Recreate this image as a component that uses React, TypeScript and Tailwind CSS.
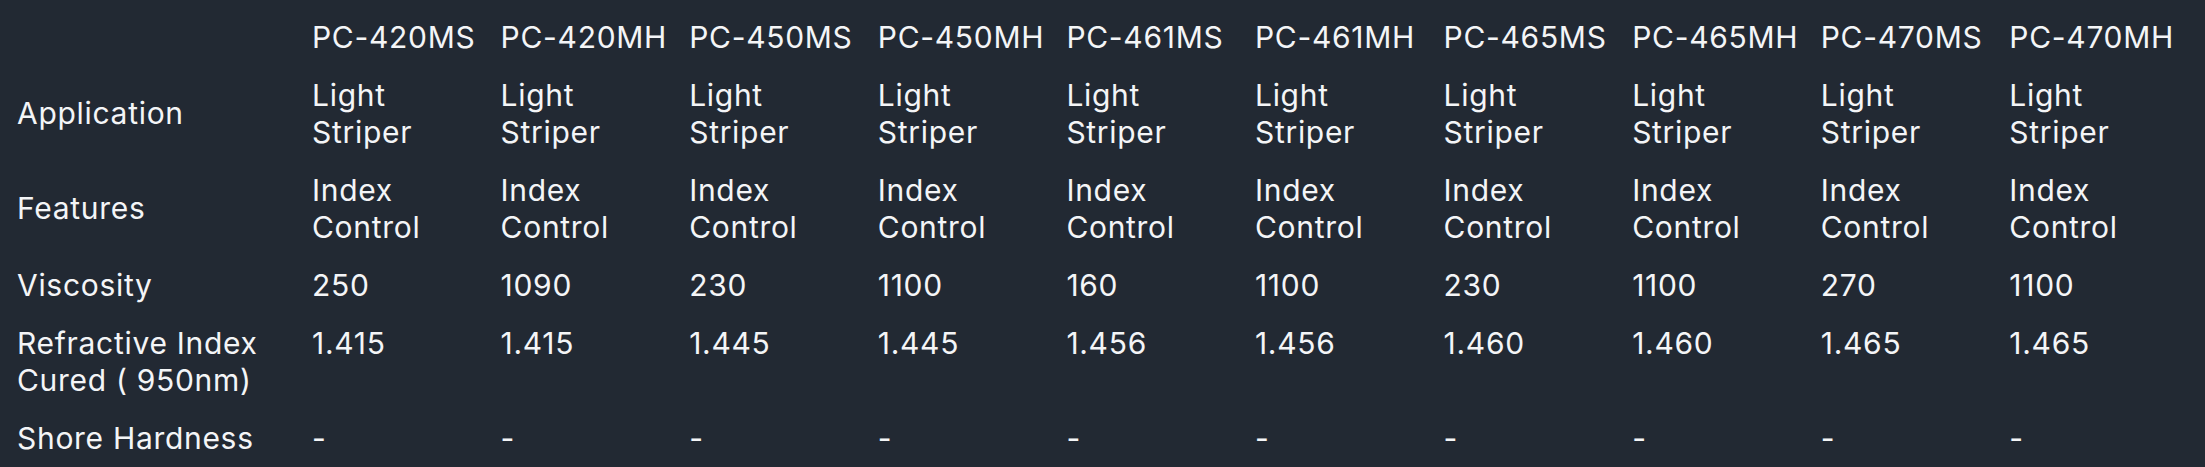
const models = [
  "PC-420MS",
  "PC-420MH",
  "PC-450MS",
  "PC-450MH",
  "PC-461MS",
  "PC-461MH",
  "PC-465MS",
  "PC-465MH",
  "PC-470MS",
  "PC-470MH",
];

type SpecRow = {
  label: string[];
  values: string[][];
};

const rows: SpecRow[] = [
  {
    label: ["Application"],
    values: models.map(() => ["Light", "Striper"]),
  },
  {
    label: ["Features"],
    values: models.map(() => ["Index", "Control"]),
  },
  {
    label: ["Viscosity"],
    values: ["250", "1090", "230", "1100", "160", "1100", "230", "1100", "270", "1100"].map((v) => [v]),
  },
  {
    label: ["Refractive Index", "Cured ( 950nm)"],
    values: ["1.415", "1.415", "1.445", "1.445", "1.456", "1.456", "1.460", "1.460", "1.465", "1.465"].map(
      (v) => [v]
    ),
  },
  {
    label: ["Shore Hardness"],
    values: models.map(() => ["-"]),
  },
];

function Lines({ lines }: { lines: string[] }) {
  return (
    <>
      {lines.map((l, i) => (
        <div key={i} className="whitespace-nowrap">
          {l}
        </div>
      ))}
    </>
  );
}

export default function App() {
  return (
    <div
      className="w-[2205px] h-[467px] overflow-hidden bg-[#222933] text-[#f4f5f7] pt-[8px] pl-[6px] text-[30px] leading-[37px] tracking-[0.7px]"
      style={{ fontFamily: "Inter, 'Noto Sans', sans-serif" }}
    >
      <div className="grid grid-cols-[295px_repeat(10,188.6px)]">
        <div className="px-[11px] py-[10.5px]" />
        {models.map((m) => (
          <div key={m} className="px-[11px] py-[10.5px] whitespace-nowrap">
            {m}
          </div>
        ))}

        {rows.map((row) => (
          <div key={row.label[0]} className="contents">
            <div className="px-[11px] py-[10.5px] flex flex-col justify-center">
              <Lines lines={row.label} />
            </div>
            {row.values.map((v, i) => (
              <div key={i} className="px-[11px] py-[10.5px]">
                <Lines lines={v} />
              </div>
            ))}
          </div>
        ))}
      </div>
    </div>
  );
}
